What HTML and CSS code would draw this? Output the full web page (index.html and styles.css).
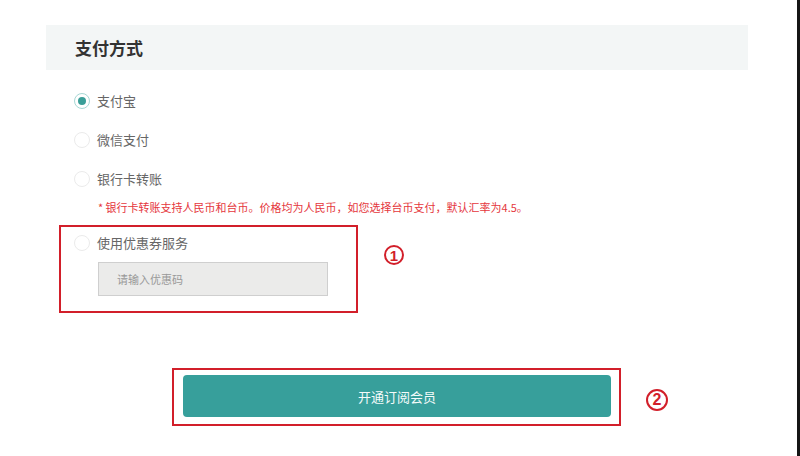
FILE: index.html
```html
<!DOCTYPE html>
<html lang="zh-CN">
<head>
<meta charset="utf-8">
<title>支付方式</title>
<link rel="stylesheet" href="styles.css">
</head>
<body>
<div class="page">
  <div class="header">支付方式</div>
  <div class="options">
    <div class="row">
      <span class="radio checked"></span><span class="label">支付宝</span>
    </div>
    <div class="row">
      <span class="radio"></span><span class="label">微信支付</span>
    </div>
    <div class="row">
      <span class="radio"></span><span class="label">银行卡转账</span>
    </div>
    <div class="note">* 银行卡转账支持人民币和台币。价格均为人民币，如您选择台币支付，默认汇率为4.5。</div>
  </div>
  <div class="coupon-wrap">
    <div class="mark-box coupon-box">
      <div class="row">
        <span class="radio"></span><span class="label">使用优惠券服务</span>
      </div>
      <div class="input">请输入优惠码</div>
    </div>
    <span class="num num1">1</span>
  </div>
  <div class="submit-wrap">
    <div class="mark-box submit-box">
      <div class="button">开通订阅会员</div>
    </div>
    <span class="num num2">2</span>
  </div>
</div>
</body>
</html>
```

FILE: styles.css
```css
html, body {
  margin: 0;
  padding: 0;
  background: #ffffff;
}
body {
  font-family: "Noto Sans CJK SC", "Noto Sans", sans-serif;
}
.page {
  width: 800px;
  height: 456px;
  box-sizing: border-box;
  border-right: 3px solid #151515;
  padding-top: 25px;
  overflow: hidden;
}
.header {
  margin-left: 46px;
  width: 702px;
  height: 45px;
  box-sizing: border-box;
  background: #f3f6f6;
  padding-left: 29px;
  display: flex;
  align-items: center;
  font-size: 17px;
  font-weight: bold;
  color: #333333;
}
.options {
  margin-left: 74px;
  margin-top: 21px;
}
.row {
  display: flex;
  align-items: center;
  height: 20px;
  margin-bottom: 19px;
}
.options .row:nth-child(3) {
  margin-bottom: 10px;
}
.radio {
  width: 16px;
  height: 16px;
  box-sizing: border-box;
  border-radius: 50%;
  border: 1px solid #ebebeb;
  background: #ffffff;
  display: flex;
  align-items: center;
  justify-content: center;
  flex: none;
}
.radio.checked {
  border: 1px solid #a8d8d5;
}
.radio.checked::after {
  content: "";
  width: 8px;
  height: 8px;
  border-radius: 50%;
  background: #3a9e98;
}
.label {
  margin-left: 7px;
  font-size: 13px;
  color: #666666;
  line-height: 20px;
}
.note {
  margin-left: 24px;
  font-size: 11px;
  line-height: 16px;
  color: #e5373d;
  white-space: nowrap;
}
.coupon-wrap {
  display: flex;
  align-items: flex-start;
  margin-left: 59px;
  margin-top: 10px;
}
.mark-box {
  border: 2px solid #d21f2a;
  box-sizing: border-box;
}
.coupon-box {
  width: 299px;
  height: 88px;
  padding: 6px 13px 0 13px;
}
.coupon-box .row {
  margin-bottom: 9px;
}
.input {
  margin-left: 24px;
  width: 230px;
  height: 34px;
  box-sizing: border-box;
  background: #ebebea;
  border: 1px solid #cfcfcf;
  padding-left: 18px;
  display: flex;
  align-items: center;
  font-size: 11px;
  color: #999999;
}
.num {
  box-sizing: border-box;
  border: 2px solid #d21f2a;
  border-radius: 50%;
  color: #d21f2a;
  display: flex;
  align-items: center;
  justify-content: center;
  font-family: "Liberation Sans", sans-serif;
  font-weight: bold;
  line-height: 1;
  flex: none;
}
.num1 {
  width: 20px;
  height: 20px;
  margin-left: 26px;
  margin-top: 20px;
  font-size: 15px;
}
.submit-wrap {
  display: flex;
  align-items: flex-start;
  margin-left: 172px;
  margin-top: 55px;
}
.submit-box {
  width: 449px;
  height: 58px;
  padding: 5px 8px 7px 9px;
}
.button {
  width: 428px;
  height: 42px;
  border-radius: 4px;
  background: #379f9b;
  color: #f4fbfa;
  font-size: 13px;
  display: flex;
  align-items: center;
  justify-content: center;
}
.num2 {
  width: 22px;
  height: 22px;
  margin-left: 25px;
  margin-top: 21px;
  font-size: 16px;
}
```
